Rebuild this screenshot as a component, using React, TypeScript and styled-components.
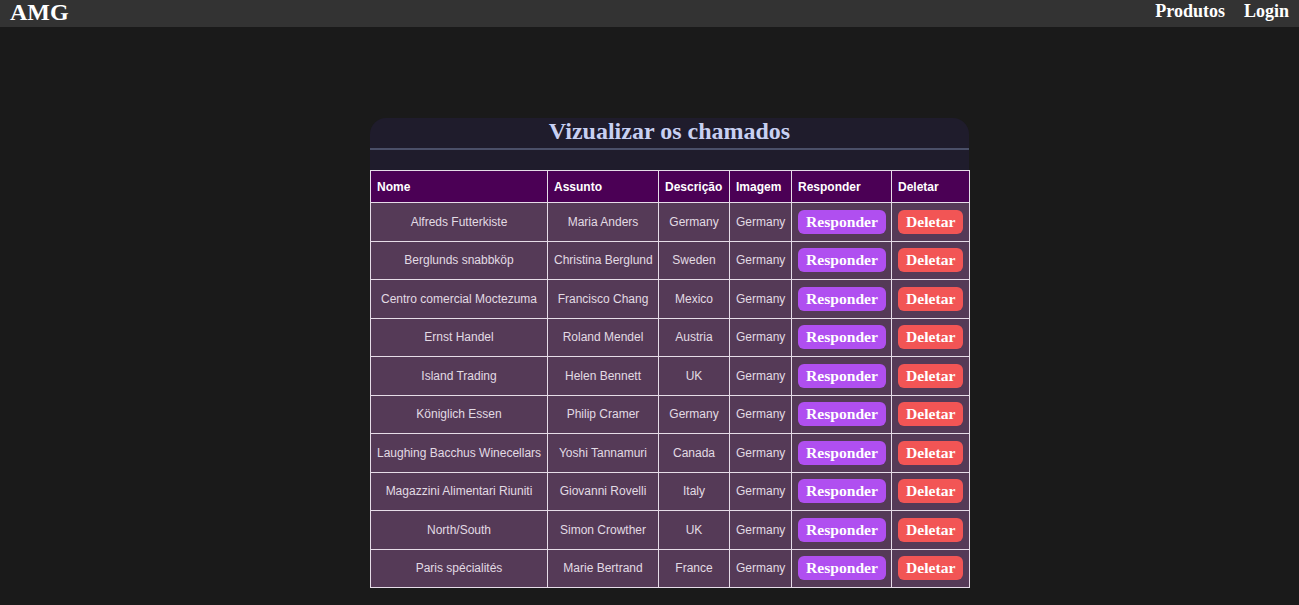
import React from "react";
import styled, { createGlobalStyle } from "styled-components";

const GlobalStyle = createGlobalStyle`
  html, body {
    margin: 0;
    padding: 0;
    background: #1a1a1a;
    font-family: "Liberation Serif", "Times New Roman", serif;
  }
`;

const NavBar = styled.nav`
  height: 27px;
  background: #333333;
  display: flex;
  align-items: center;
  justify-content: space-between;
  padding: 0 10px 0 10px;
`;

const Brand = styled.div`
  color: #ffffff;
  font-weight: bold;
  font-size: 24px;
  line-height: 24px;
  margin-top: -4px;
`;

const NavLinks = styled.div`
  display: flex;
  gap: 19px;
`;

const NavLink = styled.a`
  color: #ffffff;
  font-weight: bold;
  font-size: 18px;
  text-decoration: none;
  line-height: 20px;
  margin-top: -5px;
`;

const Main = styled.main`
  display: flex;
  justify-content: center;
  padding: 91px 0 0 40px;
`;

const Card = styled.section`
  width: 599px;
  background: #1f1c2c;
  border-radius: 16px 16px 0 0;
`;

const Title = styled.h2`
  margin: 0;
  text-align: center;
  color: #c8d0f2;
  font-size: 24px;
  line-height: 27px;
  font-weight: bold;
`;

const Rule = styled.div`
  height: 2px;
  background: #4a4f68;
  margin: 3px 0 20px;
`;

const Table = styled.table`
  width: 599px;
  border-collapse: collapse;
  table-layout: fixed;
  font-family: "Liberation Sans", Arial, sans-serif;
  font-size: 12px;
`;

const HeadCell = styled.th`
  background: #4b0055;
  color: #ffffff;
  font-weight: bold;
  text-align: left;
  border: 1px solid #e6dce8;
  padding: 0 6px;
  height: 31px;
  white-space: nowrap;
`;

const Cell = styled.td<{ $align?: "left" | "center" }>`
  background: #553a57;
  color: #e2dbe4;
  text-align: ${(p) => p.$align ?? "center"};
  border: 1px solid #e6dce8;
  padding: 0 6px;
  height: 37.5px;
  white-space: nowrap;
`;

const ActionButton = styled.button<{ $variant: "respond" | "delete" }>`
  font-family: "Liberation Serif", "Times New Roman", serif;
  font-weight: bold;
  font-size: 15.6px;
  line-height: 18px;
  color: #ffffff;
  border: none;
  border-radius: 6px;
  padding: 3px 8px;
  cursor: pointer;
  background: ${(p) => (p.$variant === "respond" ? "#b04ff0" : "#f25555")};
`;

const rows = [
  ["Alfreds Futterkiste", "Maria Anders", "Germany"],
  ["Berglunds snabbköp", "Christina Berglund", "Sweden"],
  ["Centro comercial Moctezuma", "Francisco Chang", "Mexico"],
  ["Ernst Handel", "Roland Mendel", "Austria"],
  ["Island Trading", "Helen Bennett", "UK"],
  ["Königlich Essen", "Philip Cramer", "Germany"],
  ["Laughing Bacchus Winecellars", "Yoshi Tannamuri", "Canada"],
  ["Magazzini Alimentari Riuniti", "Giovanni Rovelli", "Italy"],
  ["North/South", "Simon Crowther", "UK"],
  ["Paris spécialités", "Marie Bertrand", "France"],
];

const widths = [177, 111, 71, 62, 100, 78];

export default function App() {
  return (
    <>
      <GlobalStyle />
      <NavBar>
        <Brand>AMG</Brand>
        <NavLinks>
          <NavLink href="#">Produtos</NavLink>
          <NavLink href="#">Login</NavLink>
        </NavLinks>
      </NavBar>
      <Main>
        <Card>
          <Title>Vizualizar os chamados</Title>
          <Rule />
          <Table>
            <colgroup>
              {widths.map((w, i) => (
                <col key={i} style={{ width: w }} />
              ))}
            </colgroup>
            <thead>
              <tr>
                <HeadCell>Nome</HeadCell>
                <HeadCell>Assunto</HeadCell>
                <HeadCell>Descrição</HeadCell>
                <HeadCell>Imagem</HeadCell>
                <HeadCell>Responder</HeadCell>
                <HeadCell>Deletar</HeadCell>
              </tr>
            </thead>
            <tbody>
              {rows.map((r) => (
                <tr key={r[0]}>
                  <Cell>{r[0]}</Cell>
                  <Cell>{r[1]}</Cell>
                  <Cell>{r[2]}</Cell>
                  <Cell>Germany</Cell>
                  <Cell $align="left">
                    <ActionButton $variant="respond">Responder</ActionButton>
                  </Cell>
                  <Cell $align="left">
                    <ActionButton $variant="delete">Deletar</ActionButton>
                  </Cell>
                </tr>
              ))}
            </tbody>
          </Table>
        </Card>
      </Main>
    </>
  );
}
